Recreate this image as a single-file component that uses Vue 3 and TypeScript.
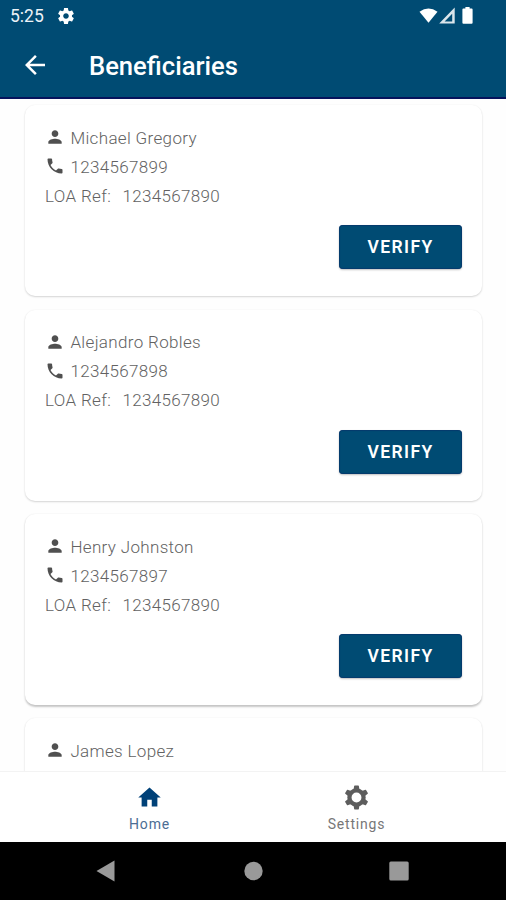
<script setup lang="ts">
interface Beneficiary {
  name: string
  phone?: string
  loaRef?: string
}

const beneficiaries: Beneficiary[] = [
  { name: 'Michael Gregory', phone: '1234567899', loaRef: '1234567890' },
  { name: 'Alejandro Robles', phone: '1234567898', loaRef: '1234567890' },
  { name: 'Henry Johnston', phone: '1234567897', loaRef: '1234567890' },
  { name: 'James Lopez' },
]

const toothAngles = [0, 60, 120, 180, 240, 300]

const gearPath =
  'M19.43 12.98c.04-.32.07-.64.07-.98s-.03-.66-.07-.98l2.11-1.65c.19-.15.24-.42.12-.64l-2-3.46c-.12-.22-.39-.3-.61-.22l-2.49 1c-.52-.4-1.08-.73-1.69-.98l-.38-2.65C14.46 2.18 14.25 2 14 2h-4c-.25 0-.46.18-.49.42l-.38 2.65c-.61.25-1.17.59-1.69.98l-2.49-1c-.23-.09-.49 0-.61.22l-2 3.46c-.13.22-.07.49.12.64l2.11 1.65c-.04.32-.07.65-.07.98s.03.66.07.98l-2.11 1.65c-.19.15-.24.42-.12.64l2 3.46c.12.22.39.3.61.22l2.49-1c.52.4 1.08.73 1.69.98l.38 2.65c.03.24.24.42.49.42h4c.25 0 .46-.18.49-.42l.38-2.65c.61-.25 1.17-.59 1.69-.98l2.49 1c.23.09.49 0 .61-.22l2-3.46c.12-.22.07-.49-.12-.64l-2.11-1.65zM12 15.5c-1.93 0-3.5-1.57-3.5-3.5s1.57-3.5 3.5-3.5 3.5 1.57 3.5 3.5-1.57 3.5-3.5 3.5z'
</script>

<template>
  <div class="screen">
    <header class="top">
      <div class="status">
        <span class="time">5:25</span>
        <svg class="status-gear" viewBox="2 2 20 20"><path :d="gearPath" /></svg>
        <svg class="signals" viewBox="0 0 56 20">
          <path d="M0.5 4.800Q9.500-1.600 18.500 4.800L9.500 15.800Z" />
          <path fill-rule="evenodd" d="M35.700 0.600V16.600H20.200ZM33.200 6.800 25.600 14.600H33.200Z" opacity=".86" />
          <path d="M46.400 0h4.200v1.400h2q1 0 1 1v13.300q0 1-1 1h-8.200q-1 0-1-1V2.400q0-1 1-1h2z" />
        </svg>
      </div>
      <div class="appbar">
        <svg class="back" viewBox="4 4 16 16"><path d="M20 11H7.830l5.590-5.590L12 4l-8 8 8 8 1.410-1.410L7.830 13H20v-2z" /></svg>
        <h1>Beneficiaries</h1>
      </div>
    </header>

    <main class="list">
      <article v-for="b in beneficiaries" :key="b.name" class="card">
        <div class="row">
          <svg class="icon" viewBox="0 0 24 24"><path d="M12 12c2.210 0 4-1.790 4-4s-1.790-4-4-4-4 1.790-4 4 1.790 4 4 4zm0 2c-2.670 0-8 1.340-8 4v2h16v-2c0-2.660-5.330-4-8-4z" /></svg>
          <span>{{ b.name }}</span>
        </div>
        <div v-if="b.phone" class="row">
          <svg class="icon" viewBox="0 0 24 24"><path d="M6.620 10.790c1.440 2.830 3.760 5.140 6.590 6.590l2.200-2.200c.27-.27.67-.36 1.020-.24 1.120.37 2.330.57 3.570.57.550 0 1 .45 1 1V20c0 .550-.45 1-1 1-9.390 0-17-7.610-17-17 0-.550.450-1 1-1h3.500c.550 0 1 .450 1 1 0 1.250.2 2.450.57 3.570.11.350.03.740-.25 1.020l-2.200 2.200z" /></svg>
          <span>{{ b.phone }}</span>
        </div>
        <div v-if="b.loaRef" class="row">
          <span class="label">LOA Ref:</span>
          <span>{{ b.loaRef }}</span>
        </div>
        <button v-if="b.loaRef" class="verify" type="button">VERIFY</button>
      </article>
    </main>

    <nav class="tabs">
      <div class="tab active">
        <svg viewBox="0 0 24 24"><path d="M10 20v-6h4v6h5v-8h3L12 3 2 12h3v8z" /></svg>
        <span>Home</span>
      </div>
      <div class="tab">
        <svg viewBox="0 0 24 24">
          <circle class="ring" cx="12" cy="12" r="6.300" />
          <path
            v-for="angle in toothAngles"
            :key="angle"
            d="M9.300 5.600 9.900 1.700Q10 1.300 10.400 1.300H13.600Q14 1.300 14.100 1.700L14.700 5.600Z"
            :transform="`rotate(${angle} 12 12)`"
          />
        </svg>
        <span>Settings</span>
      </div>
    </nav>

    <footer class="system">
      <svg viewBox="0 0 20 22"><path d="M18.500 .5v21L.5 11z" /></svg>
      <svg viewBox="0 0 20 22"><circle cx="10.500" cy="11" r="9.200" /></svg>
      <svg viewBox="0 0 20 22"><rect x=".3" y="1.500" width="19.400" height="19" rx="1.500" /></svg>
    </footer>
  </div>
</template>

<style>
body {
  margin: 0;
}
</style>

<style scoped>
.screen {
  display: flex;
  flex-direction: column;
  width: 506px;
  height: 900px;
  overflow: hidden;
  background: #fefefe;
  font-family: Roboto, sans-serif;
}

svg {
  display: block;
  flex: none;
  fill: currentColor;
}

.top {
  flex: none;
  box-sizing: border-box;
  height: 99px;
  background: #004b73;
  border-bottom: 2px solid #06135c;
  color: #fff;
}

.status {
  display: flex;
  align-items: center;
  height: 32px;
  padding: 0 32px 0 10px;
}

.time {
  width: 48px;
  font-size: 17.500px;
  line-height: 32px;
  color: #edf3f8;
}

.status-gear {
  width: 16px;
  height: 16px;
  margin-top: -1px;
}

.signals {
  width: 56px;
  height: 20px;
  margin: 2px -0.500px 0 auto;
}

.appbar {
  display: flex;
  align-items: center;
  height: 66px;
  padding-left: 25px;
}

.back {
  width: 20px;
  height: 20px;
  margin-top: -1px;
}

h1 {
  margin: 1px 0 0 44px;
  font-size: 25.600px;
  font-weight: 500;
  line-height: 30px;
}

.list {
  display: flex;
  flex: 1;
  flex-direction: column;
  gap: 13.400px;
  min-height: 0;
  padding: 6.300px 24px 0 25px;
  overflow: hidden;
}

.card {
  display: flex;
  flex: none;
  flex-direction: column;
  box-sizing: border-box;
  height: 191px;
  padding: 18px 20px 0;
  border-radius: 10px;
  background: #fff;
  box-shadow: 0 1px 2px rgba(0, 0, 0, 0.16), 0 0 2px rgba(0, 0, 0, 0.04);
}

.card:nth-child(3) {
  box-shadow: 0 1.200px 2px rgba(0, 0, 0, 0.22), 0 0 2px rgba(0, 0, 0, 0.04);
}

.row {
  display: flex;
  align-items: center;
  height: 29px;
  font-size: 17px;
  font-weight: 300;
  letter-spacing: 0.340px;
  color: #626262;
}

.icon {
  width: 20px;
  height: 20px;
  margin: -1px 5.400px 0 0;
  color: #505050;
}

.label {
  width: 77.400px;
}

.verify {
  align-self: flex-end;
  width: 123px;
  height: 44px;
  margin-top: 15px;
  padding: 0;
  border: 0;
  border-radius: 4px;
  background: #004b73;
  box-shadow: inset 0 0 1px 0.500px #082d68, 0 1px 2px rgba(0, 0, 0, 0.25);
  color: #fff;
  font: 600 17.500px/45px Roboto, sans-serif;
  letter-spacing: 1.400px;
}

.tabs {
  display: flex;
  flex: none;
  justify-content: center;
  box-sizing: border-box;
  height: 71px;
  border-top: 1px solid #f3f3f3;
  background: #fff;
}

.tab {
  display: flex;
  flex-direction: column;
  align-items: center;
  width: 207px;
  padding-top: 12px;
  color: #5d5d5d;
  font-size: 14px;
  line-height: 18px;
  letter-spacing: 0.800px;
}

.tab svg {
  width: 27px;
  height: 27px;
  margin-bottom: 4px;
}

.ring {
  fill: none;
  stroke: currentColor;
  stroke-width: 3.800;
}

.tab span {
  color: #777;
}

.tab.active svg {
  color: #004178;
}

.tab.active span {
  color: #4c6d94;
}

.system {
  display: flex;
  flex: none;
  justify-content: space-between;
  align-items: center;
  box-sizing: border-box;
  height: 58px;
  padding: 0 97px 0 96px;
  background: #000;
  color: #999;
}

.system svg {
  width: 20px;
  height: 22px;
}
</style>
